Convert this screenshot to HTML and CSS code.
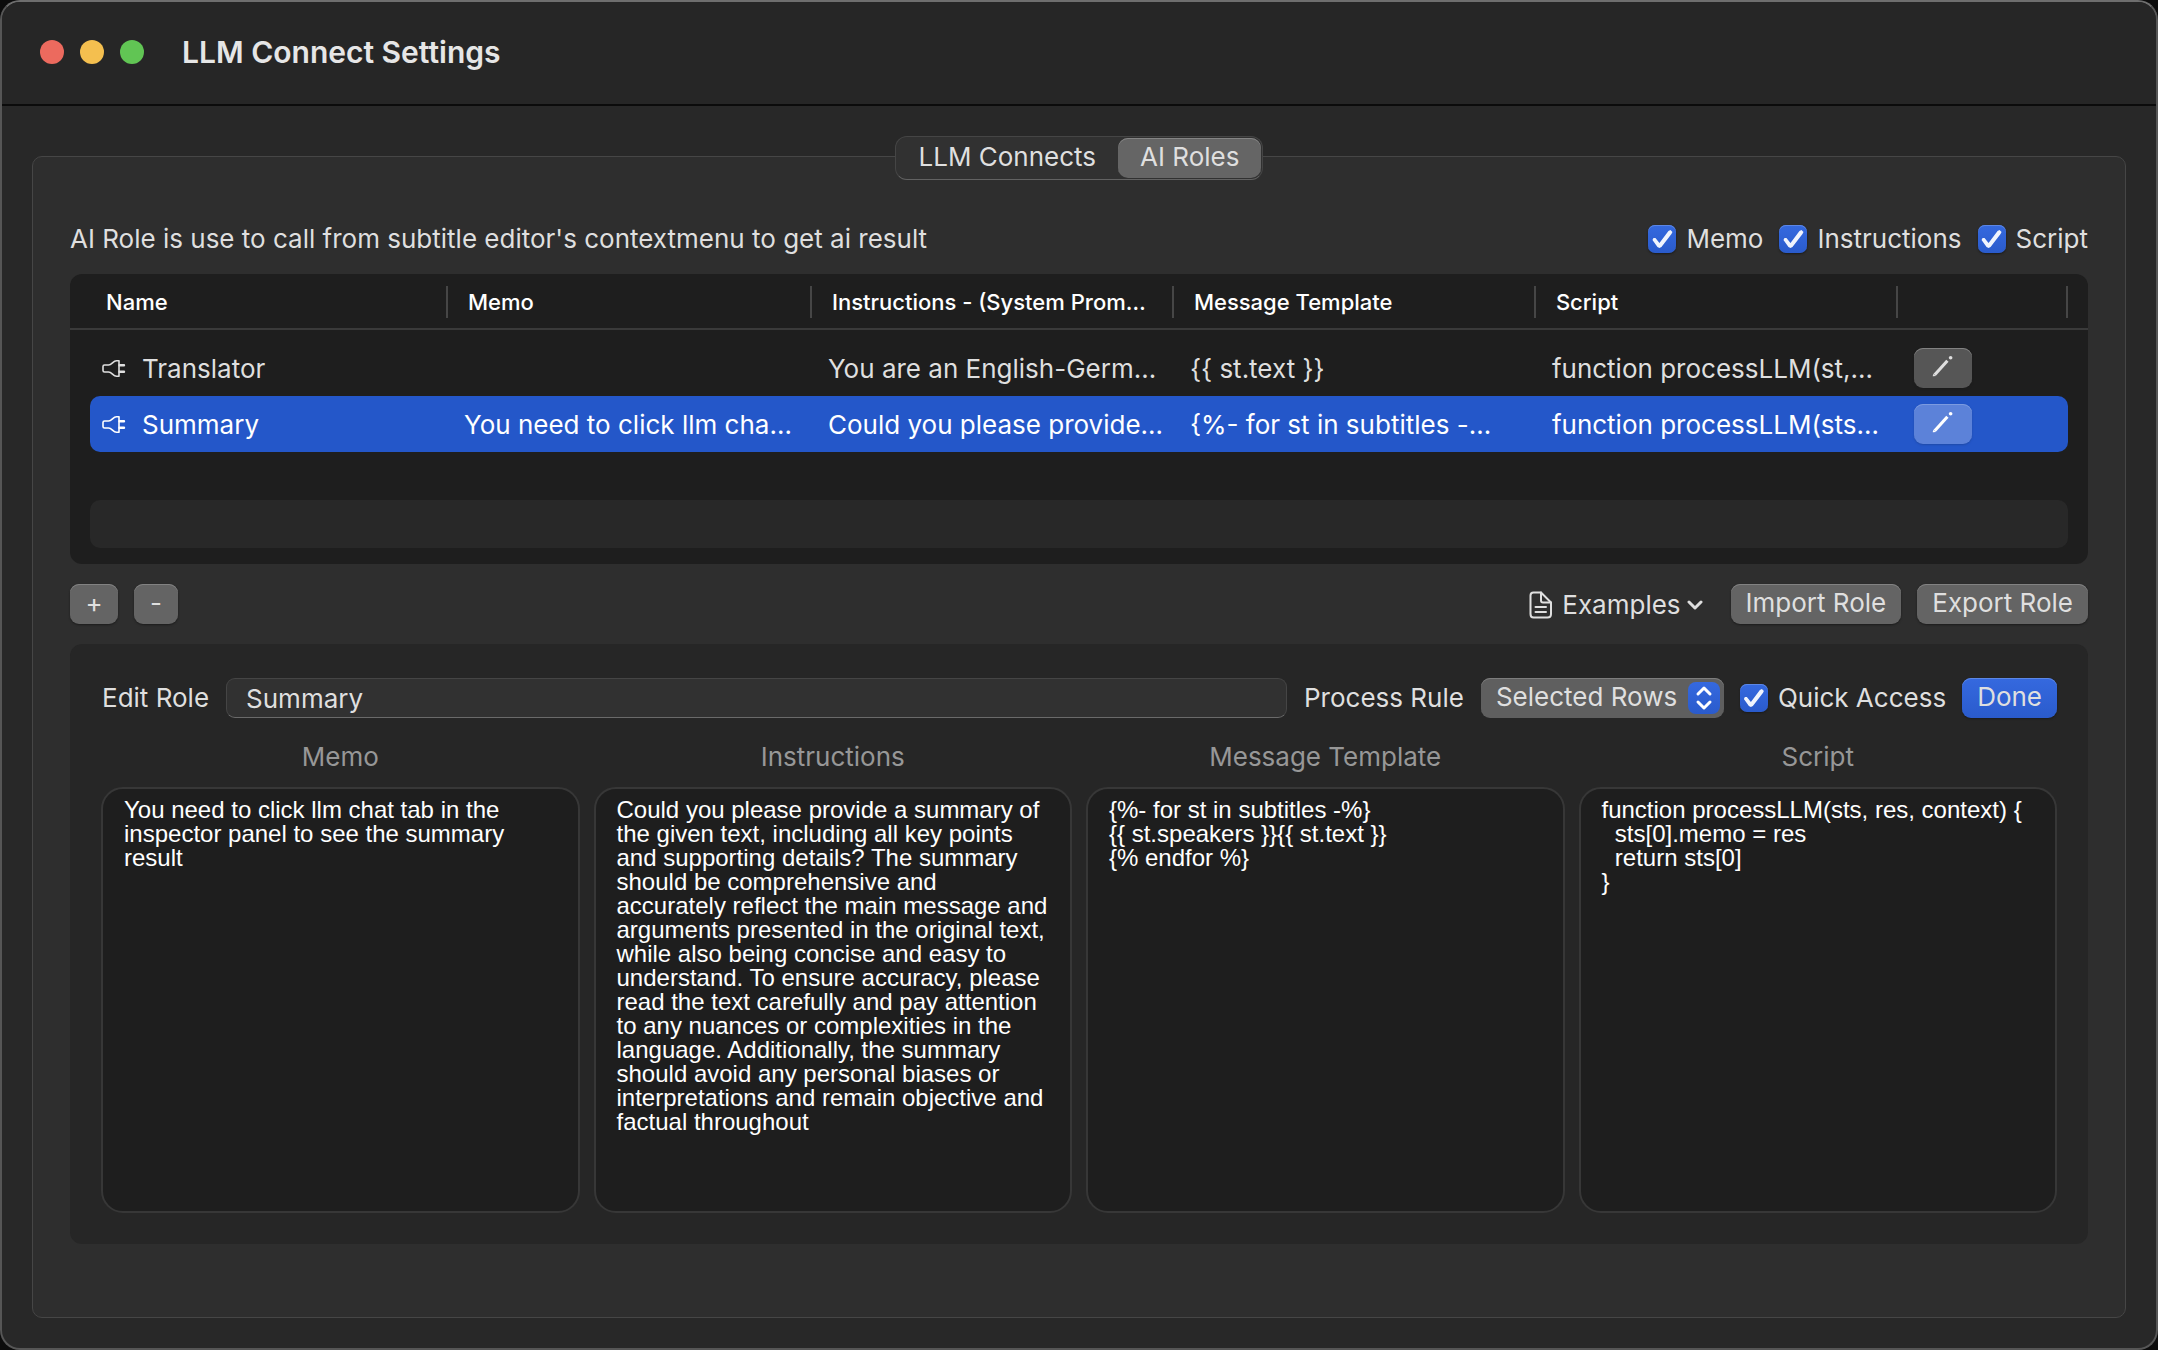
FILE: index.html
```html
<!DOCTYPE html>
<html lang="en">
<head>
  <meta charset="UTF-8">
  <meta name="viewport" content="width=device-width, initial-scale=1">
  <title>LLM Connect Settings</title>
  <link rel="stylesheet" href="styles.css">
</head>
<body>

  <!-- Shared icons -->
  <svg class="sprite" aria-hidden="true">
    <symbol id="icon-plug" viewBox="0 0 24 24">
      <path d="M17 3.800h-2.500C11 3.800 10 8 6.500 8H2.500Q1 8 1 9.500V13.500Q1 15 2.500 15H6.500C10 15 11 19.200 14.500 19.200H17Z" fill="none" stroke="currentColor" stroke-width="1.600" stroke-linejoin="round"/>
      <path d="M17.500 8.300H22M17.500 14.700H22" fill="none" stroke="currentColor" stroke-width="2.400" stroke-linecap="round"/>
    </symbol>
    <symbol id="icon-pencil" viewBox="0 0 24 24">
      <path d="M3 21.500L16.800 6.200" fill="none" stroke="currentColor" stroke-width="3.400"/>
      <path d="M1.600 20.500L4.400 22.800L1.500 23.300Q.6 23.400 .8 22.500Z" fill="currentColor"/>
      <circle cx="20.300" cy="3" r="2" fill="currentColor"/>
    </symbol>
  </svg>

  <div class="window">
    <header class="titlebar">
      <div class="lights">
        <span class="light red"></span>
        <span class="light yellow"></span>
        <span class="light green"></span>
      </div>
      <h1>LLM Connect Settings</h1>
    </header>

    <main class="content">
      <nav class="tabs">
        <button type="button" class="tab">LLM Connects</button>
        <button type="button" class="tab active">AI Roles</button>
      </nav>

      <section class="group">
        <!-- Column toggles -->
        <div class="intro">
          <p>AI Role is use to call from subtitle editor's contextmenu to get ai result</p>
          <div class="checks">
            <label class="check"><input type="checkbox" checked>Memo</label>
            <label class="check"><input type="checkbox" checked>Instructions</label>
            <label class="check"><input type="checkbox" checked>Script</label>
          </div>
        </div>

        <!-- Roles list -->
        <div class="table-box">
          <table>
            <thead>
              <tr>
                <th class="col-name">Name</th>
                <th class="col-memo">Memo</th>
                <th class="col-inst">Instructions - (System Prom…</th>
                <th class="col-msg">Message Template</th>
                <th class="col-script">Script</th>
                <th aria-label="Edit"></th>
              </tr>
            </thead>
            <tbody>
              <tr>
                <td><span class="role"><svg class="plug"><use href="#icon-plug"/></svg>Translator</span></td>
                <td></td>
                <td>You are an English-Germ…</td>
                <td>{{ st.text }}</td>
                <td>function processLLM(st,…</td>
                <td><button type="button" class="btn edit" aria-label="Edit Translator"><svg><use href="#icon-pencil"/></svg></button></td>
              </tr>
              <tr class="selected">
                <td><span class="role"><svg class="plug"><use href="#icon-plug"/></svg>Summary</span></td>
                <td>You need to click llm cha…</td>
                <td>Could you please provide…</td>
                <td>{%- for st in subtitles -…</td>
                <td>function processLLM(sts…</td>
                <td><button type="button" class="btn edit" aria-label="Edit Summary"><svg><use href="#icon-pencil"/></svg></button></td>
              </tr>
            </tbody>
          </table>
          <div class="empty-row"></div>
        </div>

        <div class="toolbar">
          <button type="button" class="btn small">+</button>
          <button type="button" class="btn small minus">-</button>
          <button type="button" class="examples">
            <svg class="doc" viewBox="0 0 24 28">
              <path d="M4.500 1.500H12L22 11.500V23Q22 26.500 18.500 26.500H4.500Q1.500 26.500 1.500 23V4.500Q1.500 1.500 4.500 1.500Z" />
              <path d="M12 1.500V9.500Q12 11.500 14 11.500H22M6.500 16H17M6.500 21H17" />
            </svg>
            Examples
            <svg class="chevron" viewBox="0 0 16 10"><path d="M2 2l6 6 6-6"/></svg>
          </button>
          <button type="button" class="btn">Import Role</button>
          <button type="button" class="btn">Export Role</button>
        </div>

        <!-- Role editor -->
        <form class="editor">
          <div class="editor-bar">
            <label class="caption" for="roleName">Edit Role</label>
            <input type="text" id="roleName" class="field" value="Summary">
            <label class="caption" for="rule">Process Rule</label>
            <div class="select">
              <select id="rule">
                <option>Selected Rows</option>
              </select>
              <svg class="stepper" viewBox="0 0 32 32"><path d="M10 12l6-6 6 6M10 20l6 6 6-6"/></svg>
            </div>
            <label class="check"><input type="checkbox" checked>Quick Access</label>
            <button type="button" class="btn primary">Done</button>
          </div>

          <div class="panes">
            <div class="pane">
              <label for="memo">Memo</label>
              <textarea id="memo" spellcheck="false">You need to click llm chat tab in the inspector panel to see the summary result</textarea>
            </div>
            <div class="pane">
              <label for="instructions">Instructions</label>
              <textarea id="instructions" spellcheck="false">Could you please provide a summary of the given text, including all key points and supporting details? The summary should be comprehensive and accurately reflect the main message and arguments presented in the original text, while also being concise and easy to understand. To ensure accuracy, please read the text carefully and pay attention to any nuances or complexities in the language. Additionally, the summary should avoid any personal biases or interpretations and remain objective and factual throughout</textarea>
            </div>
            <div class="pane">
              <label for="template">Message Template</label>
              <textarea id="template" spellcheck="false">{%- for st in subtitles -%}
{{ st.speakers }}{{ st.text }}
{% endfor %}</textarea>
            </div>
            <div class="pane">
              <label for="script">Script</label>
              <textarea id="script" spellcheck="false">function processLLM(sts, res, context) {
  sts[0].memo = res
  return sts[0]
}</textarea>
            </div>
          </div>
        </form>
      </section>
    </main>
  </div>

</body>
</html>
```
FILE: styles.css
```css
* {
  box-sizing: border-box;
}

body {
  margin: 0;
  background: #0c0c0c;
  color: #dfdfdf;
  font-family: Inter, "Liberation Sans", sans-serif;
  font-size: 26px;
  line-height: 32px;
}

button, input, select {
  font: inherit;
  color: inherit;
}

.sprite {
  display: none;
}

.window {
  display: flex;
  flex-direction: column;
  min-height: 100vh;
  background: #282828;
  border: 2px solid #565656;
  border-top-color: #6e6e6e;
  border-radius: 20px;
  overflow: hidden;
}

/* Title bar */
.titlebar {
  display: flex;
  align-items: center;
  gap: 38px;
  height: 104px;
  padding: 0 38px 2px;
  background: #262626;
  border-bottom: 2px solid #0b0b0b;
}

.lights {
  display: flex;
  gap: 16px;
}

.light {
  width: 24px;
  height: 24px;
  border-radius: 50%;
}

.red {
  background: #ec6a5e;
}

.yellow {
  background: #f4bf4f;
}

.green {
  background: #61c554;
}

h1 {
  margin: 0;
  font-size: 30px;
  font-weight: 600;
  color: #e6e6e6;
}

.content {
  flex: 1;
  display: flex;
  flex-direction: column;
  padding: 30px;
}

/* Tabs sit over the top border of the group */
.tabs {
  position: relative;
  z-index: 1;
  align-self: center;
  display: flex;
  height: 44px;
  margin-bottom: -24px;
  padding: 1px;
  background: #313131;
  border: 1px solid #454545;
  border-bottom-color: #626262;
  border-radius: 12px;
}

.tab {
  padding: 0 22px 2px;
  background: none;
  border: none;
  border-radius: 10px;
}

.tab.active {
  background: #656565;
  box-shadow: inset 0 1px #858585;
}

.group {
  flex: 1;
  padding: 64px 37px 72px;
  background: #2e2e2e;
  border: 1px solid #464646;
  border-radius: 10px;
}

.intro {
  display: flex;
  justify-content: space-between;
  align-items: center;
  height: 36px;
  margin-bottom: 17px;
}

.intro p {
  margin: 0;
}

.checks {
  display: flex;
  gap: 16px;
}

.check {
  display: flex;
  align-items: center;
  gap: 10px;
  white-space: nowrap;
}

.check input {
  appearance: none;
  position: relative;
  flex: none;
  width: 28px;
  height: 28px;
  margin: 0;
  border-radius: 7px;
  background: linear-gradient(#3569df, #2a5bcc);
  box-shadow: inset 0 1px #5c87e6, 0 1px 2px #1a1a1a;
}

.check input:checked::after {
  content: "";
  position: absolute;
  inset: 0;
  background: #f0f4fd;
  clip-path: polygon(4px 15px, 5px 13px, 7px 13px, 11px 18px, 20px 6px, 22px 5px, 24px 7px, 23px 9px, 13px 22px, 11px 23px, 9px 22px);
}

/* Roles list */
.table-box {
  height: 290px;
  background: #1e1e1e;
  border-radius: 12px;
}

table {
  width: 100%;
  padding: 0 20px;
  table-layout: fixed;
  border-spacing: 0;
  background: linear-gradient(#3a3a3a, #3a3a3a) 0 54px / 100% 2px no-repeat;
}

th {
  height: 56px;
  padding: 0 0 0 20px;
  font-size: 22px;
  font-weight: 500;
  text-align: left;
  color: #fff;
  white-space: nowrap;
  background: linear-gradient(#464646, #464646) 100% 12px / 2px 32px no-repeat;
}

th:first-child {
  padding-left: 16px;
}

.col-name {
  width: 18.1%;
}

.col-memo, .col-inst, .col-msg, .col-script {
  width: 18.3%;
}

.col-memo {
  width: 18.4%;
}

tbody::before {
  content: "";
  display: block;
  height: 10px;
}

td {
  height: 56px;
  padding: 2px 0 0 16px;
  white-space: nowrap;
}

td:first-child {
  padding-left: 12px;
  border-radius: 10px 0 0 10px;
}

td:last-child {
  padding-top: 0;
  border-radius: 0 10px 10px 0;
}

.selected td {
  background: #2457c9;
  color: #fff;
}

.role {
  display: flex;
  align-items: center;
  gap: 16px;
}

.plug {
  width: 24px;
  height: 24px;
}

.empty-row {
  height: 48px;
  margin: 48px 20px 0;
  background: #282828;
  border-radius: 10px;
}

/* Buttons */
.btn {
  height: 40px;
  padding: 0 15px 2px;
  background: #646464;
  border: none;
  border-radius: 9px;
  box-shadow: inset 0 1px #828282, 0 1px 2px #1c1c1c;
  white-space: nowrap;
}

.btn.small {
  width: 48px;
  padding: 0 0 2px;
}

.btn.minus {
  width: 44px;
}

.btn.edit {
  display: block;
  width: 58px;
  padding: 0;
  background: #565656;
}

.btn.edit svg {
  display: block;
  width: 22px;
  height: 22px;
  margin: 0 auto 4px;
}

.selected .edit {
  background: #5c82d9;
  box-shadow: inset 0 1px #7c9be0, 0 1px 2px #1f4aa8;
}

.btn.primary {
  background: linear-gradient(#3569df, #2a5bcc);
  box-shadow: inset 0 1px #5c87e6, 0 1px 2px #1a1a1a;
}

.toolbar {
  display: flex;
  align-items: center;
  gap: 16px;
  margin: 20px 0;
}

.examples {
  display: flex;
  align-items: center;
  gap: 6px;
  height: 40px;
  margin: 0 12px 0 auto;
  padding: 2px 0 0;
  background: none;
  border: none;
}

.examples svg {
  fill: none;
  stroke: currentColor;
  stroke-width: 2;
  stroke-linecap: round;
  stroke-linejoin: round;
}

.doc {
  width: 24px;
  height: 28px;
  margin-right: 3px;
}

.examples .chevron {
  width: 16px;
  height: 10px;
  stroke-width: 3;
}

/* Role editor */
.editor {
  padding: 34px 31px;
  background: #262626;
  border-radius: 12px;
}

.editor-bar {
  display: flex;
  align-items: center;
  gap: 16px;
  white-space: nowrap;
}

.caption {
  margin: 0 1px;
}

.field {
  flex: 1;
  min-width: 0;
  height: 40px;
  padding: 0 19px;
  background: #313131;
  border: 1px solid #454545;
  border-bottom-color: #6a6a6a;
  border-radius: 9px;
}

.select {
  position: relative;
}

.select select {
  appearance: none;
  display: block;
  height: 40px;
  padding: 0 46px 2px 15px;
  background: #5f5f5f;
  border: none;
  border-radius: 9px;
  box-shadow: inset 0 1px #7d7d7d;
}

.stepper {
  position: absolute;
  top: 4px;
  right: 4px;
  width: 32px;
  height: 32px;
  border-radius: 8px;
  background: linear-gradient(#3569df, #2a5bcc);
  fill: none;
  stroke: #fff;
  stroke-width: 3;
  stroke-linecap: round;
  stroke-linejoin: round;
  pointer-events: none;
}

.panes {
  display: grid;
  grid-template-columns: repeat(4, 1fr);
  gap: 14px;
  margin-top: 23px;
}

.pane label {
  display: block;
  margin-bottom: 14px;
  text-align: center;
  color: #979797;
}

textarea {
  display: block;
  width: 100%;
  height: 426px;
  padding: 9px 20px 9px 21px;
  resize: none;
  background: #1e1e1e;
  border: 2px solid #373737;
  border-radius: 22px;
  color: #fff;
  font-family: "Liberation Sans", Helvetica, sans-serif;
  font-size: 24px;
  line-height: 24px;
}

.editor {
  padding-bottom: 31px;
}
```
